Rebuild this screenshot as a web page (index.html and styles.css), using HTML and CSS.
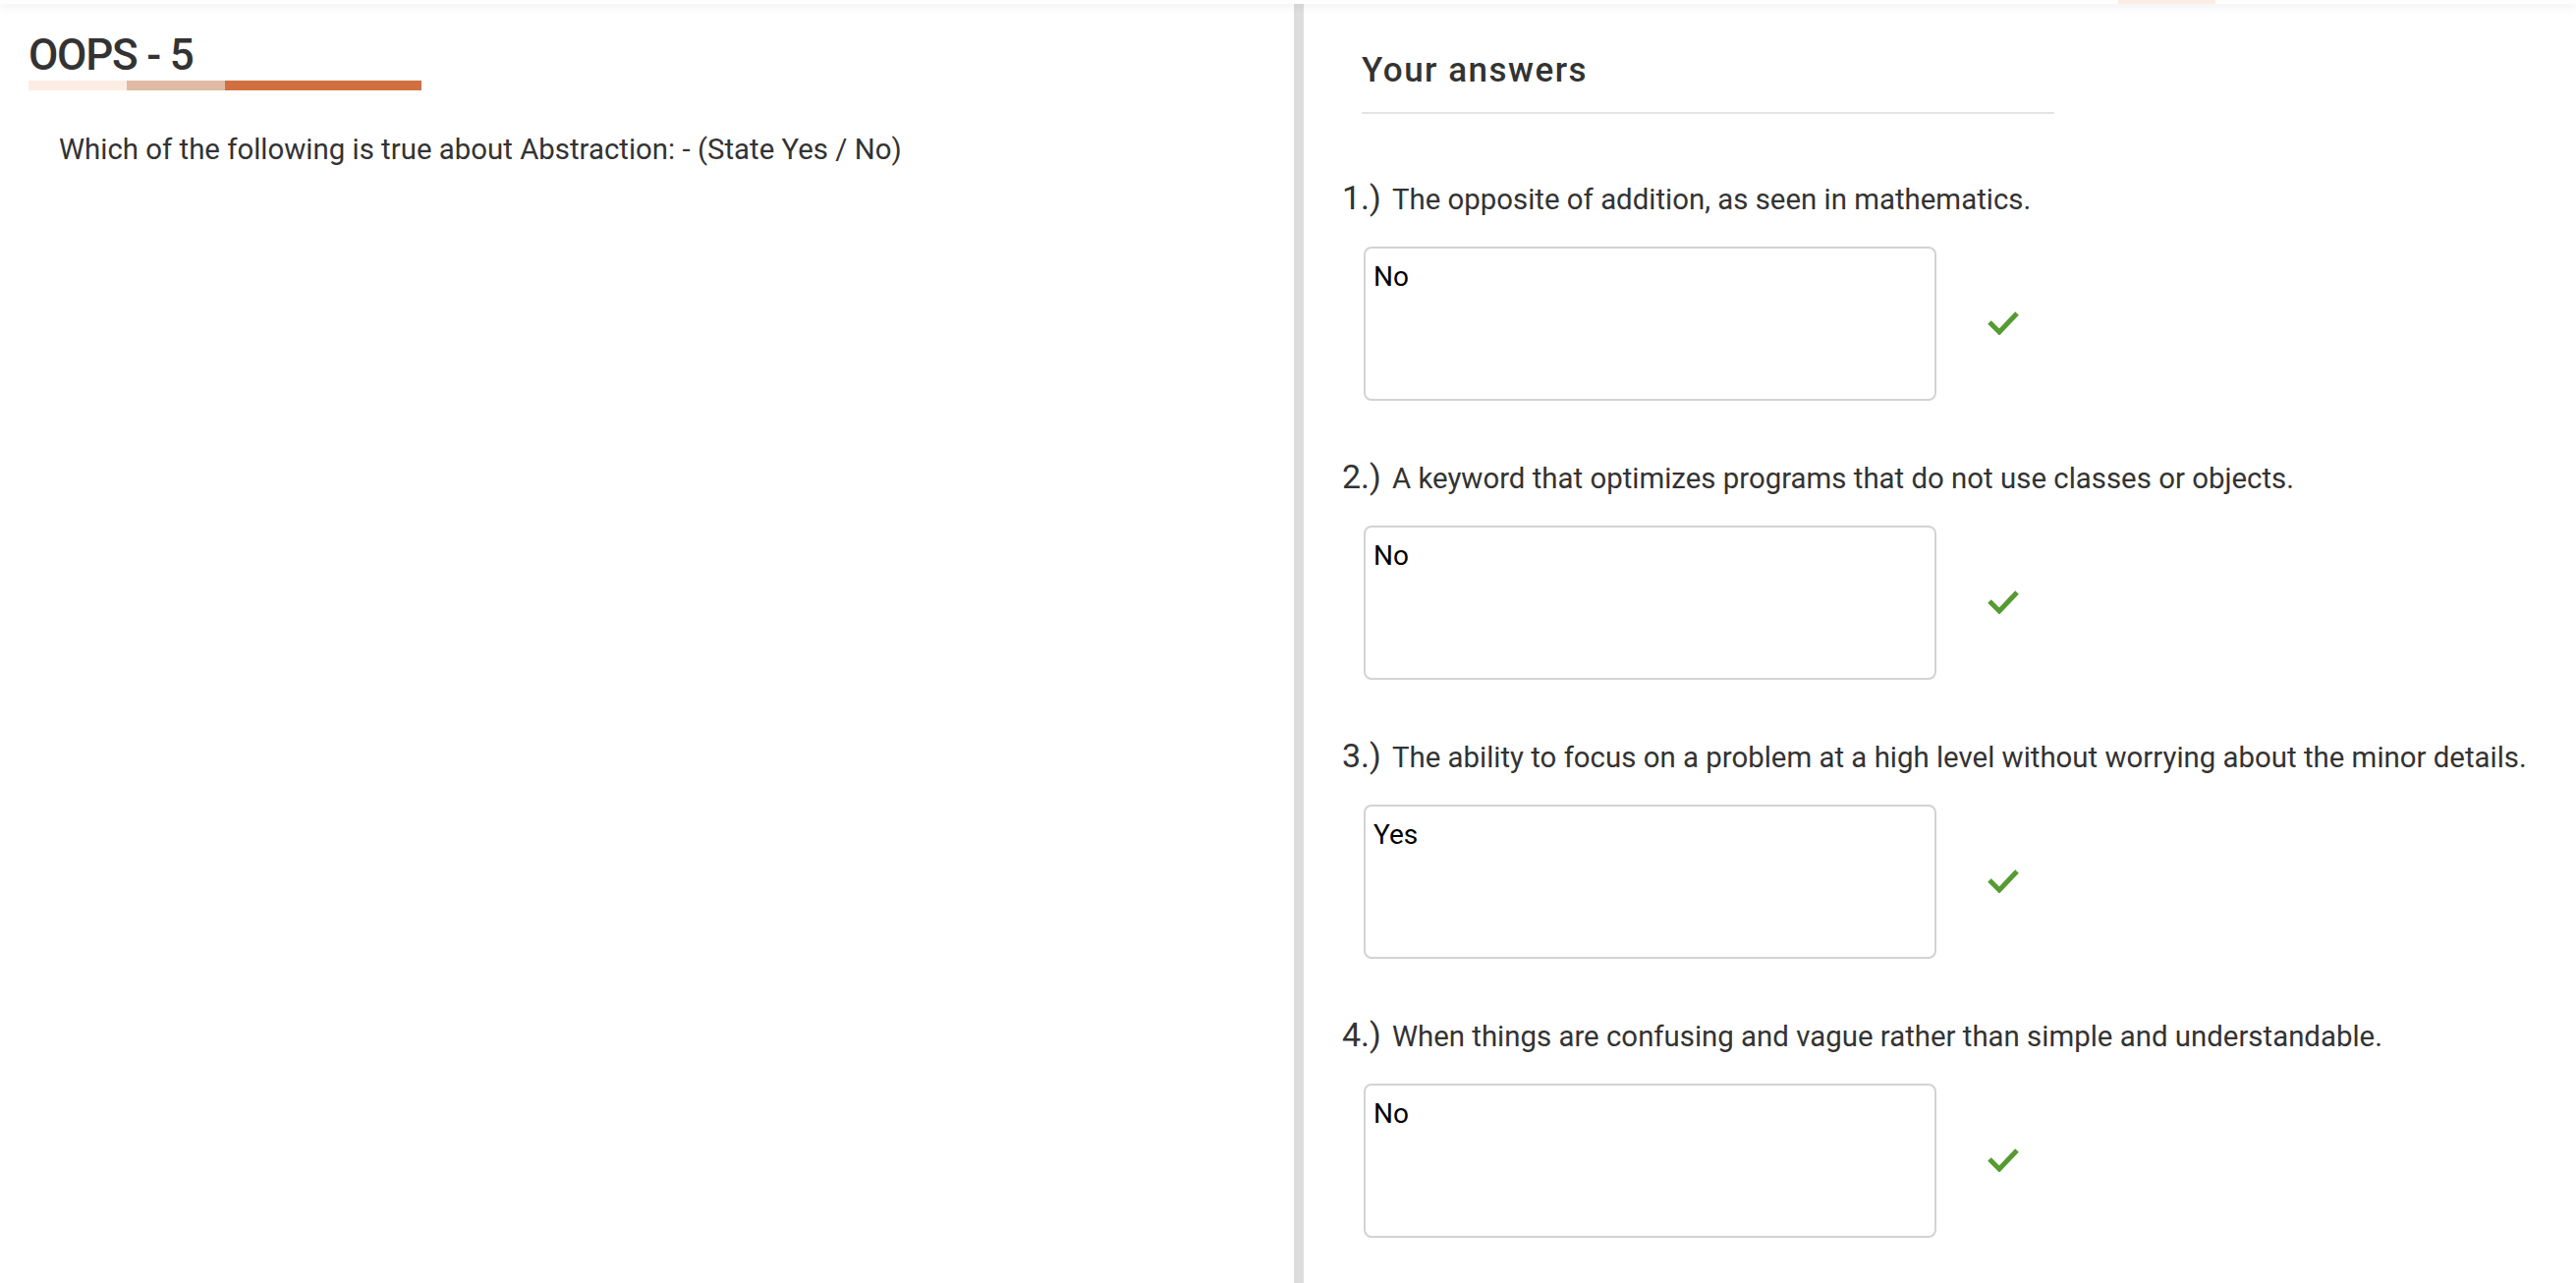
FILE: index.html
```html
<!DOCTYPE html>
<html lang="en">
<head>
<meta charset="utf-8">
<title>OOPS - 5</title>
<link rel="stylesheet" href="styles.css">
</head>
<body>
<header class="topbar"><div class="topbar-seg"></div></header>
<main class="split">
  <section class="left">
    <h1 class="title">OOPS - 5</h1>
    <div class="progress">
      <span class="seg seg-1"></span>
      <span class="seg seg-2"></span>
      <span class="seg seg-3"></span>
    </div>
    <p class="prompt">Which of the following is true about Abstraction: - (State Yes / No)</p>
  </section>
  <div class="divider"></div>
  <section class="right">
    <h2 class="answers-title">Your answers</h2>
    <div class="question">
      <div class="q-line"><span class="q-num">1.)</span><span class="q-text">The opposite of addition, as seen in mathematics.</span></div>
      <div class="q-answer">
        <div class="answer-box">No</div>
        <svg class="check" width="32" height="24" viewBox="0 0 32 24"><polyline points="2,11 12,21 30,2" fill="none" stroke="#569b31" stroke-width="5"/></svg>
      </div>
    </div>
    <div class="question">
      <div class="q-line"><span class="q-num">2.)</span><span class="q-text">A keyword that optimizes programs that do not use classes or objects.</span></div>
      <div class="q-answer">
        <div class="answer-box">No</div>
        <svg class="check" width="32" height="24" viewBox="0 0 32 24"><polyline points="2,11 12,21 30,2" fill="none" stroke="#569b31" stroke-width="5"/></svg>
      </div>
    </div>
    <div class="question">
      <div class="q-line"><span class="q-num">3.)</span><span class="q-text">The ability to focus on a problem at a high level without worrying about the minor details.</span></div>
      <div class="q-answer">
        <div class="answer-box">Yes</div>
        <svg class="check" width="32" height="24" viewBox="0 0 32 24"><polyline points="2,11 12,21 30,2" fill="none" stroke="#569b31" stroke-width="5"/></svg>
      </div>
    </div>
    <div class="question">
      <div class="q-line"><span class="q-num">4.)</span><span class="q-text">When things are confusing and vague rather than simple and understandable.</span></div>
      <div class="q-answer">
        <div class="answer-box">No</div>
        <svg class="check" width="32" height="24" viewBox="0 0 32 24"><polyline points="2,11 12,21 30,2" fill="none" stroke="#569b31" stroke-width="5"/></svg>
      </div>
    </div>
  </section>
</main>
</body>
</html>
```
FILE: styles.css
```css
html, body {
  margin: 0;
  padding: 0;
  background: #ffffff;
}
body {
  font-family: Roboto, "Noto Sans", sans-serif;
  color: #333333;
  overflow: hidden;
}
.topbar {
  position: relative;
  z-index: 2;
  height: 4px;
  background: #fdfdfd;
  box-shadow: 0 2px 9px rgba(0, 0, 0, 0.10);
  display: flex;
  justify-content: flex-end;
  padding-right: 367px;
}
.topbar-seg {
  width: 99px;
  height: 4px;
  background: #fcede4;
}
.split {
  display: flex;
  height: 1302px;
}
.left {
  width: 1317px;
  flex: none;
}
.title {
  margin: 26px 0 0 29px;
  font-size: 44px;
  line-height: 52px;
  font-weight: 500;
  letter-spacing: -1.2px;
  color: #333333;
}
.progress {
  display: flex;
  margin-left: 29px;
  width: 400px;
  height: 10px;
}
.seg { display: block; height: 10px; }
.seg-1 { width: 100px; background: #fcede4; }
.seg-2 { width: 100px; background: #e0bba3; }
.seg-3 { width: 200px; background: #d07040; }
.prompt {
  margin: 42px 0 0 60px;
  font-size: 29.4px;
  line-height: 36px;
  color: #333333;
}
.divider {
  width: 10px;
  flex: none;
  background: #dddddd;
}
.right {
  flex: 1;
  padding-left: 39px;
}
.answers-title {
  margin: 48px 0 0 20px;
  width: 705px;
  font-size: 35px;
  line-height: 40px;
  font-weight: 500;
  letter-spacing: 1.5px;
  padding-bottom: 22px;
  border-bottom: 2px solid #e4e4e4;
  color: #333333;
}
.question {
  margin-bottom: 57px;
}
.question:first-of-type {
  margin-top: 65px;
}
.q-line {
  height: 42px;
  font-size: 29.4px;
  line-height: 40px;
  white-space: nowrap;
}
.q-num {
  font-size: 34px;
  margin-right: 11px;
}
.q-answer {
  display: flex;
  align-items: center;
  margin: 28px 0 0 22px;
}
.answer-box {
  box-sizing: border-box;
  width: 583px;
  height: 157px;
  border: 2px solid #d3d3d3;
  border-radius: 8px;
  padding: 11px 8px;
  font-size: 28px;
  line-height: 36px;
  color: #000000;
}
.check {
  margin-left: 52px;
  margin-top: -2px;
}
```
